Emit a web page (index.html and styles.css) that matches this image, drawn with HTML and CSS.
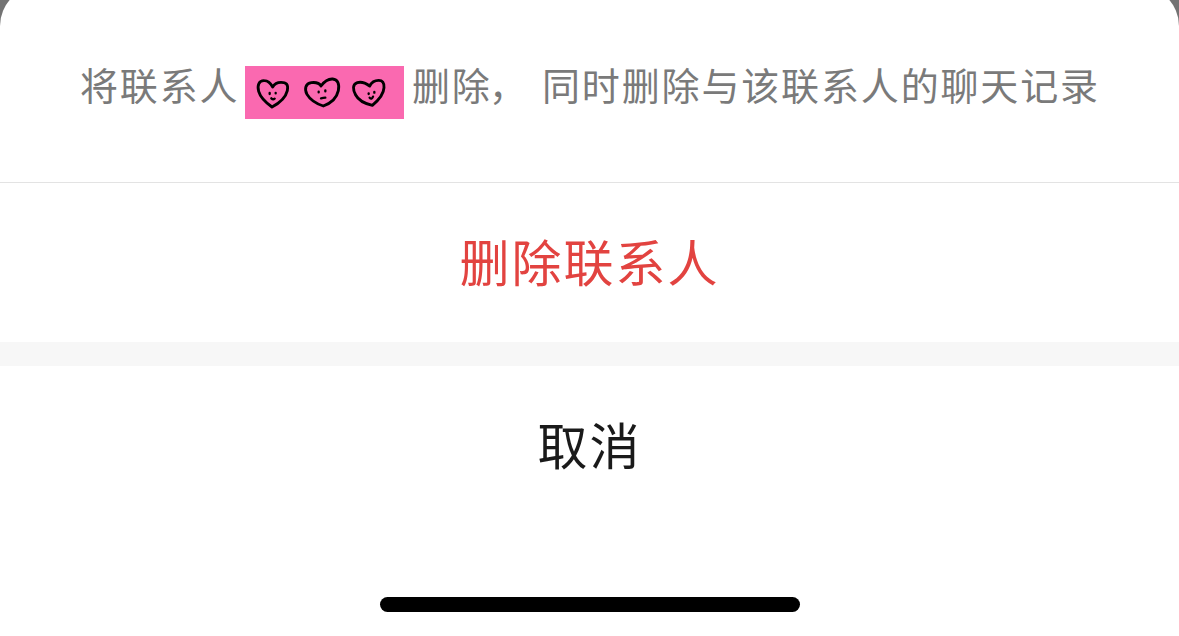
FILE: index.html
```
<!DOCTYPE html>
<html lang="zh-CN">
<head>
  <meta charset="UTF-8">
  <meta name="viewport" content="width=device-width, initial-scale=1">
  <title>删除联系人</title>
  <link rel="stylesheet" href="styles.css">
</head>

<body>

  <div class="sheet">
    <div class="message">
      <span>将联系人</span>
      <!-- Contact name -->
      <svg class="contact-name" viewBox="0 0 477 159" role="img" aria-label="♡♡♡">
        <g class="heart">
          <path d="M83 63 C77 52 70 44 58 44 C42 43 36 58 41 76 C47 97 63 110 81 123 C102 112 122 95 127 74 C131 54 123 49 108 49 C95 49 88 54 83 63"/>
          <path d="M228 60 C222 50 207 49 199 50 C182 52 177 69 186 85 C196 102 214 113 235 120 C257 112 275 97 280 74 C284 54 278 40 263 39 C248 38 239 45 228 60"/>
          <path d="M374 60 C359 49 347 47 337 50 C322 55 323 70 332 87 C342 106 360 113 382 118 C399 104 416 87 417 65 C418 50 412 43 401 43 C387 43 379 50 374 60"/>
        </g>
        <g class="face">
          <path d="M74 81v3M92 81v1M79 97q5 5 10 1"/>
          <path d="M221 77v2M241 73v3M228 97q7-1 13-2"/>
          <path d="M371 82v2M388 78v2M374 95q6 7 10-3"/>
        </g>
      </svg>
      <span class="comma-part">删除<span class="comma">，</span></span>
      <span>同时删除与该联系人的聊天记录</span>
    </div>
    <button class="action delete-btn">删除联系人</button>
    <div class="separator"></div>
    <button class="action cancel-btn">取消</button>
    <div class="home-indicator"></div>
  </div>

</body>
</html>
```

FILE: styles.css
```
* {
  margin: 0;
  padding: 0;
  box-sizing: border-box;
}
body {
  font-family: 'Noto Sans CJK SC', sans-serif;
  background: #737373;
  height: 636px;
  overflow: hidden;
}
/* the rounded top of the sheet runs past the top of the screen */
.sheet {
  background: #fff;
  height: 650px;
  margin-top: -14px;
  padding-top: 14px;
  border-radius: 40px 40px 0 0;
  display: flex;
  flex-direction: column;
}
.message {
  height: 183px;
  padding: 54px 0 0 80px;
  border-bottom: 1px solid #e3e3e3;
  display: flex;
  align-items: flex-start;
  color: #7a7a7a;
  font-size: 38px;
  font-weight: 400;
  line-height: 60px;
  letter-spacing: 1.85px;
  white-space: nowrap;
}
.contact-name {
  width: 159px;
  height: 53px;
  margin: 12px 8px 0 5.6px;
  background: #fa69b0;
  flex-shrink: 0;
}
.heart, .face {
  fill: none;
  stroke: #000;
  stroke-width: 8.5;
  stroke-linecap: round;
  stroke-linejoin: round;
}
.face {
  stroke-width: 7;
}
.comma-part {
  width: 130px;
}
.comma {
  margin-left: -3px;
}
.action {
  border: none;
  background: #fff;
  font-family: inherit;
  font-size: 50px;
  font-weight: 400;
  letter-spacing: 2px;
  cursor: pointer;
}
.delete-btn {
  height: 159px;
  padding-bottom: 6px;
  color: #e24340;
}
.separator {
  height: 24px;
  background: #f7f7f7;
}
.cancel-btn {
  height: 160px;
  padding-bottom: 6px;
  color: #1a1a1a;
}
.home-indicator {
  width: 420px;
  height: 15px;
  margin: 71px auto 0;
  border-radius: 8px;
  background: #000;
}
```
